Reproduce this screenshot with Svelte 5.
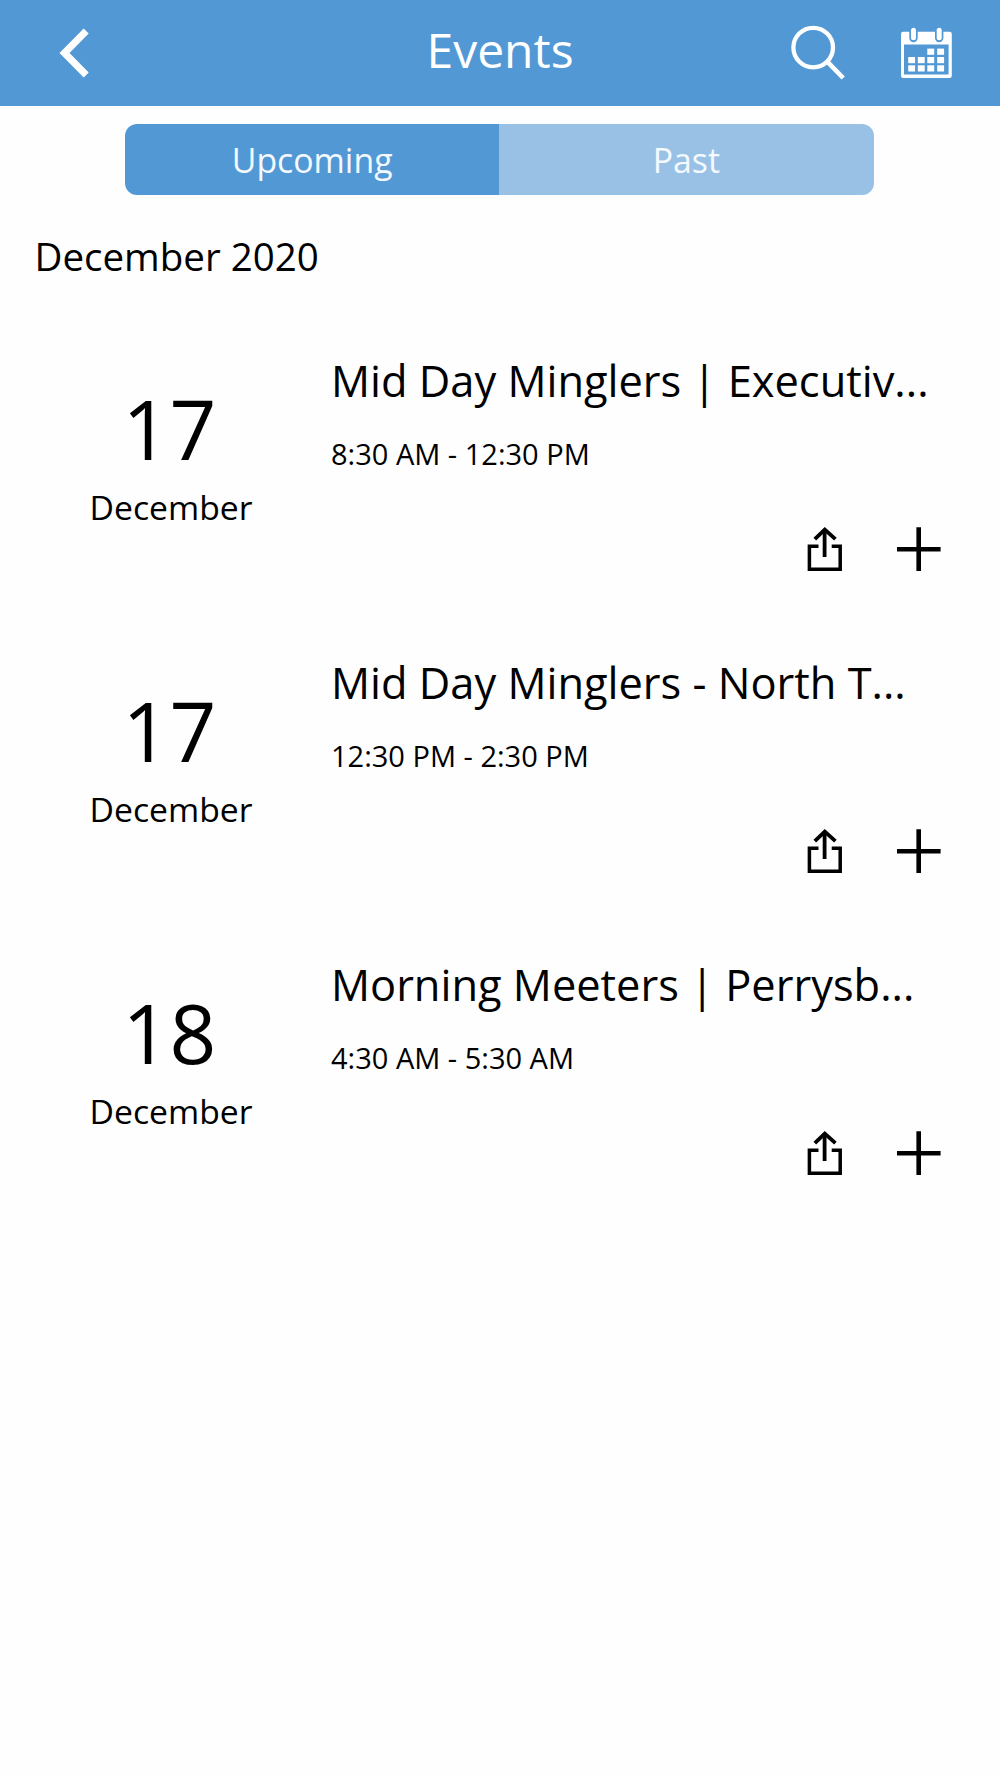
<script lang="ts">
	let tab = $state('upcoming');

	const tabs = [
		{ key: 'upcoming', label: 'Upcoming' },
		{ key: 'past', label: 'Past' }
	];

	const events = [
		{ day: 17, month: 'December', title: 'Mid Day Minglers | Executiv...', time: '8:30 AM - 12:30 PM' },
		{ day: 17, month: 'December', title: 'Mid Day Minglers - North T...', time: '12:30 PM - 2:30 PM' },
		{ day: 18, month: 'December', title: 'Morning Meeters | Perrysb...', time: '4:30 AM - 5:30 AM' }
	];

	// day cells of the calendar icon, the first two of the top row are blank
	const cells = [
		[927.3, 48.6], [937.2, 48.6],
		[908.2, 57], [917.8, 57], [927.3, 57], [937.2, 57],
		[908.2, 65.3], [917.8, 65.3], [927.3, 65.3], [937.2, 65.3]
	];
</script>

<div class="screen">
	<header>
		<button class="back" aria-label="Back">
			<svg width="30" height="50" viewBox="59.5 27.5 30 50">
				<path d="M84.2 28 89.2 33 70 52.5 89.2 72 84.2 77 60 52.5Z" fill="#fff" />
			</svg>
		</button>
		<h1>Events</h1>
		<div class="tools">
			<button aria-label="Search">
				<svg width="55" height="55" viewBox="790 25 55 55">
					<g fill="none" stroke="#fff" stroke-width="4.3">
						<circle cx="813.2" cy="47.6" r="19.8" />
						<path d="M827 61.4 843.2 78" stroke-width="4.6" />
					</g>
				</svg>
			</button>
			<button aria-label="Calendar">
				<svg width="51" height="55" viewBox="901 25 51 55">
					<path
						d="M903.2 31.8H949.6A2.2 2.2 0 0 1 951.8 34V75.8A2.2 2.2 0 0 1 949.6 78H903.2A2.2 2.2 0 0 1 901 75.8V34A2.2 2.2 0 0 1 903.2 31.8ZM904 44.4V74.4H948.6V44.4Z"
						fill="#fff"
						fill-rule="evenodd"
					/>
					{#each [913.5, 939.2] as x}
						<path d="M{x} 30.5V38" stroke="#5298d5" stroke-width="8.4" stroke-linecap="round" />
						<path d="M{x} 30.3V37.8" stroke="#fff" stroke-width="5" stroke-linecap="round" />
					{/each}
					{#each cells as [x, y]}
						<rect {x} {y} width="6.9" height="6.2" fill="#fff" />
					{/each}
				</svg>
			</button>
		</div>
	</header>

	<nav>
		{#each tabs as t}
			<button class:active={tab === t.key} onclick={() => (tab = t.key)}>{t.label}</button>
		{/each}
	</nav>

	<h2>December 2020</h2>

	<div class="list">
		{#each events as event}
			<article>
				<div class="date">
					<div class="day">{event.day}</div>
					<div class="month">{event.month}</div>
				</div>
				<div class="info">
					<h3>{event.title}</h3>
					<p>{event.time}</p>
					<div class="actions">
						<button aria-label="Share">
							<svg width="36" height="46" viewBox="807 526 36 46">
								<g fill="none" stroke="#000">
									<path d="M818.5 546.2H809.4V569.2H840.2V546.2H831.7" stroke-width="3.5" />
									<path d="M824.6 557V529.5" stroke-width="3.8" />
									<path d="M814.8 539.2 824.8 529.6 835.4 539.2" stroke-width="3.8" />
								</g>
							</svg>
						</button>
						<button aria-label="Add">
							<svg width="46" height="46" viewBox="896 526 46 46">
								<path d="M897 549.3H940.6M918.7 527.2V571" stroke="#000" stroke-width="4.6" />
							</svg>
						</button>
					</div>
				</div>
			</article>
		{/each}
	</div>
</div>

<style>
	:global(body) {
		margin: 0;
		background: #fefefe;
	}
	.screen {
		min-height: 1778px;
		font-family: 'Open Sans', sans-serif;
		color: #000;
	}
	button {
		display: block;
		padding: 0;
		border: 0;
		background: none;
		font: inherit;
		color: inherit;
	}
	svg {
		display: block;
	}
	h1,
	h2,
	h3,
	p {
		margin: 0;
		font-weight: 400;
		white-space: nowrap;
	}
	header {
		display: grid;
		grid-template-columns: 1fr auto 1fr;
		align-items: start;
		height: 106px;
		box-sizing: border-box;
		padding: 0 48px;
		background: #5298d5;
		color: #fff;
	}
	.back {
		padding: 27.5px 0 0 11px;
	}
	h1 {
		font-size: 48px;
		line-height: 99px;
	}
	.tools {
		display: flex;
		justify-content: flex-end;
		gap: 56px;
		padding-top: 25px;
	}
	nav {
		display: flex;
		width: 748.5px;
		height: 71px;
		margin: 18px 0 0 125px;
		border-radius: 12px;
		overflow: hidden;
	}
	nav button {
		flex: 1;
		padding-top: 1px;
		background: #98c1e5;
		color: #f4f9fd;
		font-size: 33.8px;
	}
	nav button.active {
		background: #5298d5;
	}
	h2 {
		padding: 31px 0 0 34.5px;
		font-size: 38.5px;
		line-height: 60px;
	}
	.list {
		padding-top: 64px;
	}
	article {
		display: flex;
		height: 302px;
	}
	.date {
		width: 331px;
		padding-top: 38px;
	}
	.day {
		width: 339px;
		font-size: 82px;
		line-height: 80px;
		text-align: center;
	}
	.month {
		width: 342px;
		padding-top: 16px;
		font-size: 33.7px;
		line-height: 46px;
		text-align: center;
	}
	.info {
		flex: 1;
		padding-right: 58px;
	}
	h3 {
		padding-top: 1px;
		font-size: 43.4px;
		line-height: 60px;
	}
	p {
		padding-top: 23px;
		font-size: 29px;
		line-height: 40px;
	}
	.actions {
		display: flex;
		justify-content: flex-end;
		gap: 53px;
		padding-top: 52px;
	}
</style>
